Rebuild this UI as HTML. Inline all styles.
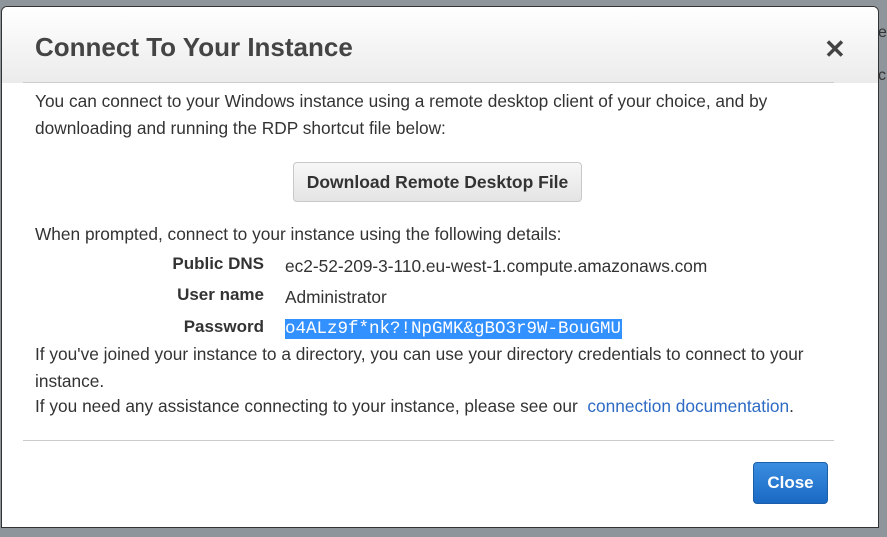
<!DOCTYPE html>
<html><head><style>
html,body{margin:0;padding:0;}
body{width:887px;height:537px;background:#8f969b;position:relative;overflow:hidden;font-family:"Liberation Sans",Arial,sans-serif;}
.modal{position:absolute;left:1px;top:6px;width:876px;height:520px;background:#fff;border:1px solid #333;border-radius:6px 6px 0 0;overflow:hidden;}
.hdr{position:absolute;left:0;top:0;width:100%;height:76px;background:linear-gradient(#fff,#ebebeb);}
.hdr .line{position:absolute;left:21px;right:44px;top:75px;height:1px;background:#ccc;}
h1{position:absolute;left:33px;top:25px;margin:0;font-size:26px;font-weight:bold;color:#444;}
.x{position:absolute;left:822px;top:27px;font-size:26px;color:#444;font-weight:bold;}
p{position:absolute;left:33px;margin:0;font-size:17.3px;color:#333;line-height:27px;}
.btn{position:absolute;left:291px;top:155px;width:287px;height:38px;border:1px solid #c8c8c8;border-radius:4px;background:linear-gradient(#f7f7f7,#e4e4e4);font-size:17.5px;font-weight:bold;color:#333;text-align:center;line-height:38px;}
.lab{position:absolute;width:262px;text-align:right;font-size:17px;font-weight:bold;color:#333;}
.val{position:absolute;left:283px;font-size:17.3px;color:#333;}
.pw{position:absolute;left:283px;top:312px;height:20px;width:337px;background:#3390ff;color:#fff;font-family:"Liberation Mono",monospace;font-size:17.5px;line-height:20px;letter-spacing:0;white-space:nowrap;overflow:hidden;}
a{color:#2e6bc4;text-decoration:none;}
.fl{position:absolute;left:21px;right:44px;top:433px;height:1px;background:#ccc;}
.close{position:absolute;left:751px;top:455px;width:73px;height:40px;border:1px solid #1b5fa8;border-radius:4px;background:linear-gradient(#3a8de0,#1a69c4);color:#fff;font-weight:bold;font-size:17px;text-align:center;line-height:40px;}
</style></head><body>
<div style="position:absolute;left:878px;top:24px;font-size:16px;color:#333">ec</div>
<div style="position:absolute;left:878px;top:67px;font-size:16px;color:#333">c</div>
<div class="modal">
<div class="hdr"><div class="line"></div></div>
<h1>Connect To Your Instance</h1>
<div class="x">✕</div>
<p style="top:81px;width:780px">You can connect to your Windows instance using a remote desktop client of your choice, and by downloading and running the RDP shortcut file below:</p>
<div class="btn">Download Remote Desktop File</div>
<p style="top:214px">When prompted, connect to your instance using the following details:</p>
<div class="lab" style="top:247px">Public DNS</div><div class="val" style="top:249px">ec2-52-209-3-110.eu-west-1.compute.amazonaws.com</div>
<div class="lab" style="top:278px">User name</div><div class="val" style="top:280px">Administrator</div>
<div class="lab" style="top:310px">Password</div><div class="pw">o4ALz9f*nk?!NpGMK&amp;gBO3r9W-BouGMU</div>
<p style="top:334px;width:790px">If you've joined your instance to a directory, you can use your directory credentials to connect to your instance.</p>
<p style="top:386px">If you need any assistance connecting to your instance, please see our &nbsp;<a>connection documentation</a>.</p>
<div class="fl"></div>
<div class="close">Close</div>
</div>
</body></html>
